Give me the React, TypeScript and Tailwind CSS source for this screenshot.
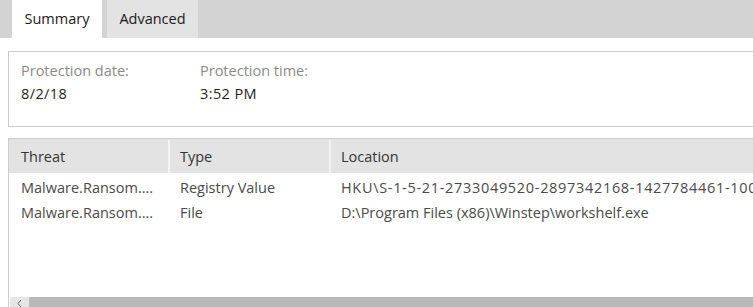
import React from 'react';

const rows = [
  { threat: 'Malware.Ransom....', type: 'Registry Value', location: 'HKU\\S-1-5-21-2733049520-2897342168-1427784461-1001', digits: true },
  { threat: 'Malware.Ransom....', type: 'File', location: 'D:\\Program Files (x86)\\Winstep\\workshelf.exe', digits: false },
];

export default function App() {
  return (
    <div className="h-[307px] w-[753px] overflow-hidden bg-white text-[14.5px]" style={{ fontFamily: '"Open Sans", "Liberation Sans", sans-serif' }}>
      {/* Tabs */}
      <div className="flex h-[38px] bg-[#d3d3d3] pl-[12px]">
        <div className="flex w-[90px] items-center justify-center bg-white text-[#1a1a1a]">Summary</div>
        <div className="ml-[5px] flex w-[91px] items-center justify-center bg-[#e3e3e3] text-[#1a1a1a]">Advanced</div>
      </div>

      {/* Summary box */}
      <div className="ml-[8px] mt-[13px] flex h-[76px] border border-r-0 border-[#cccccc] pl-[12px] pt-[8px]">
        <div className="w-[179px]">
          <div className="leading-[22px] text-[#8a8a8a]">Protection date:</div>
          <div className="leading-[23px] tracking-[0.4px] text-[#1e1e1e]">8/2/18</div>
        </div>
        <div>
          <div className="leading-[22px] text-[#8a8a8a]">Protection time:</div>
          <div className="leading-[23px] tracking-[0.4px] text-[#1e1e1e]">3:52 PM</div>
        </div>
      </div>

      {/* Threat table */}
      <div className="ml-[8px] mt-[11px] flex h-[169px] flex-col overflow-hidden border-l border-t border-[#cccccc]">
        <div className="flex h-[34px] shrink-0 bg-[#e3e3e3] pt-[1px] text-[#333333]">
          <div className="flex w-[159px] shrink-0 items-center pl-[12px]">Threat</div>
          <div className="w-[2px] shrink-0 bg-[#f2f2f2]" />
          <div className="flex w-[159px] shrink-0 items-center pl-[10px]">Type</div>
          <div className="w-[2px] shrink-0 bg-[#f2f2f2]" />
          <div className="flex flex-1 items-center pl-[10px]">Location</div>
        </div>
        <div className="flex-1 pt-[2px]">
          {rows.map((r, i) => (
            <div key={i} className="flex h-[25px] items-center whitespace-nowrap text-[#4a4a4a]">
              <div className="w-[159px] shrink-0 overflow-hidden pl-[12px]">{r.threat}</div>
              <div className="w-[2px] shrink-0" />
              <div className="w-[159px] shrink-0 overflow-hidden pl-[10px]">{r.type}</div>
              <div className="w-[2px] shrink-0" />
              <div className={r.digits ? 'shrink-0 pl-[10px] tracking-[0.68px]' : 'shrink-0 pl-[10px]'}>{r.location}</div>
            </div>
          ))}
        </div>
        {/* Horizontal scrollbar */}
        <div className="flex h-[10px] shrink-0 pl-[1px]">
          <div className="flex w-[19px] items-start justify-center bg-[#e6e6e6] pt-[3px]">
            <svg width="5" height="7" viewBox="0 0 5 7">
              <path d="M4 0 L1 3.5 L4 7" fill="none" stroke="#606060" strokeWidth="1" />
            </svg>
          </div>
          <div className="flex-1 bg-[#b9b9b9]" />
        </div>
      </div>
    </div>
  );
}
